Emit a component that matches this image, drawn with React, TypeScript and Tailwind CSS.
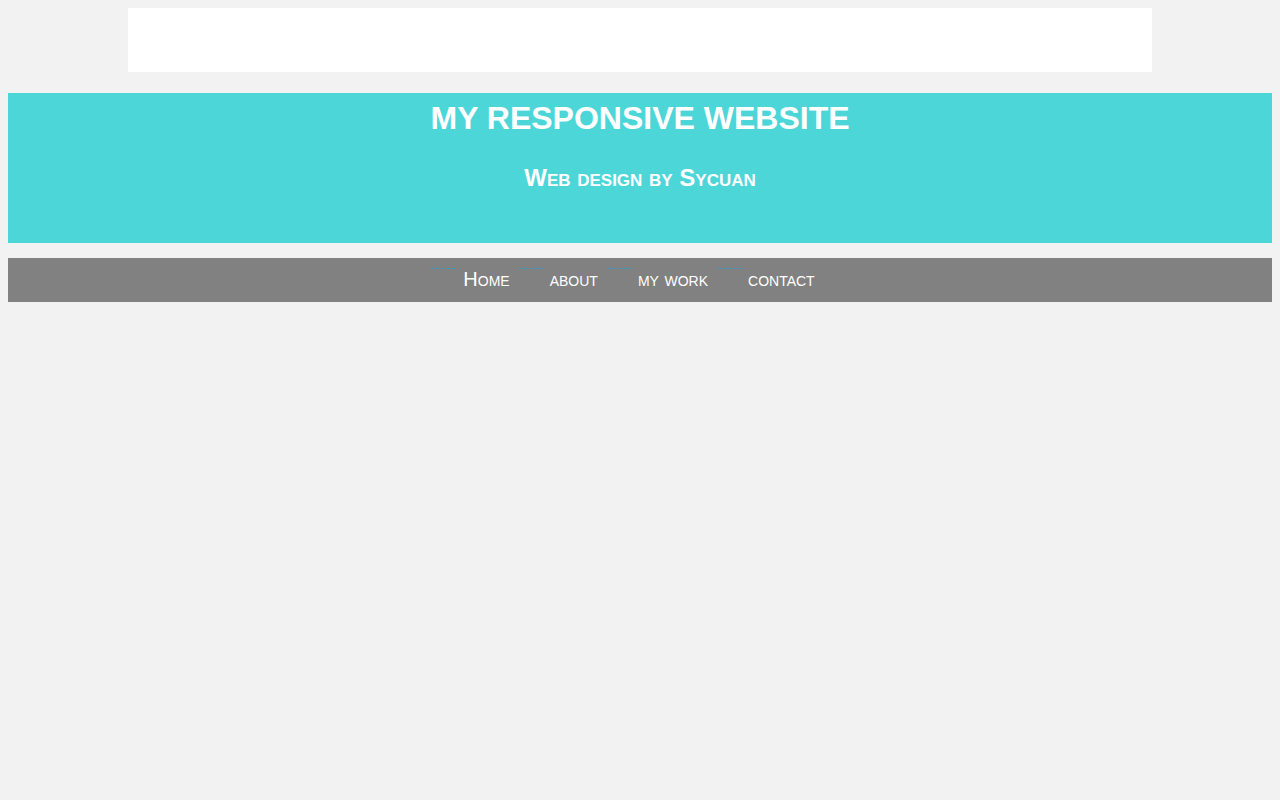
import React from "react";

const items = [
  { label: "Home", gap: "ml-[8px]" },
  { label: "about", gap: "ml-[6px]" },
  { label: "my work", gap: "ml-[6px]" },
  { label: "contact", gap: "ml-[6px]" },
];

export default function App() {
  return (
    <div
      className="min-h-[800px] w-full bg-[#f2f2f2] p-2"
      style={{ fontFamily: '"Liberation Sans", Arial, sans-serif' }}
    >
      <div className="mx-auto h-16 w-[1024px] bg-white" />
      <header className="mt-[21px] flex h-[150px] flex-col items-center bg-[#4dd6d8] text-white">
        <h1 className="mt-[7px] text-[32px] font-bold leading-[37px]">
          MY RESPONSIVE WEBSITE
        </h1>
        <h2 className="mt-[27px] text-[24px] font-bold leading-[28px] [font-variant:small-caps]">
          Web design by Sycuan
        </h2>
      </header>
      <nav className="mt-[15px] h-[44px] bg-[#818181]">
        <ul className="flex justify-center pt-[9px] pr-[24px]">
          {items.map((it) => (
            <li key={it.label} className="mr-[10px] flex items-start">
              <span className="mt-[1px] block w-6 border-t border-dashed border-[#2f9ac4]" />
              <span
                className={`${it.gap} text-[20px] leading-[24px] text-white [font-variant:small-caps]`}
              >
                {it.label}
              </span>
            </li>
          ))}
        </ul>
      </nav>
    </div>
  );
}
